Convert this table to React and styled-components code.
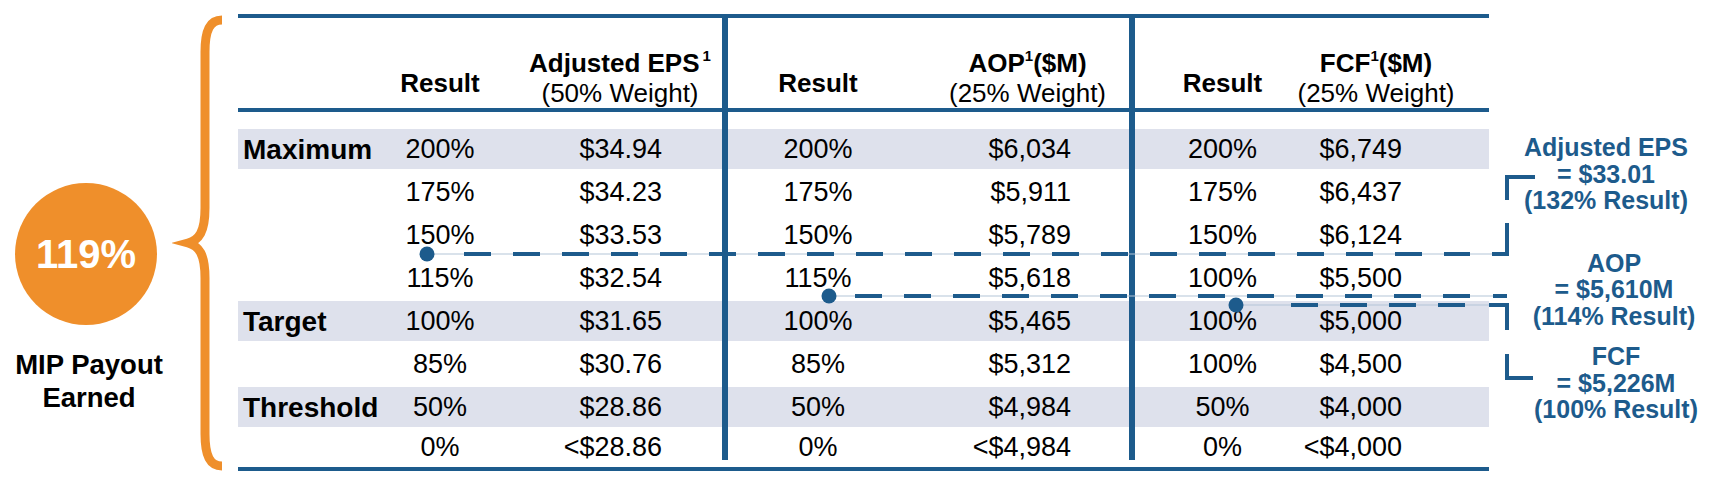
import React from 'react';
import styled, { createGlobalStyle } from 'styled-components';

const BLUE = '#1d5b8c';
const ORANGE = '#ef8f2b';

const GlobalStyle = createGlobalStyle`
  body {
    margin: 0;
    background: #fff;
    overflow: hidden;
    font-family: "Liberation Sans", Arial, sans-serif;
    color: #000;
  }
`;

const Page = styled.div`
  position: relative;
  display: flex;
  width: 1723px;
  height: 495px;
  background: #fff;
`;

const LeftPanel = styled.div`
  width: 172px;
  display: flex;
  flex-direction: column;
  align-items: center;
  padding-top: 183px;
  box-sizing: border-box;
`;

const Badge = styled.div`
  width: 142px;
  height: 142px;
  border-radius: 50%;
  background: ${ORANGE};
  color: #fff;
  font-size: 40px;
  font-weight: 700;
  display: flex;
  align-items: center;
  justify-content: center;
`;

const BadgeCaption = styled.div`
  margin-top: 23px;
  font-size: 27.5px;
  font-weight: 700;
  line-height: 33px;
  text-align: center;
  padding-left: 6px;
`;

const Brace = styled.svg`
  width: 60px;
  height: 495px;
  flex-shrink: 0;
`;

const Table = styled.div`
  display: grid;
  grid-template-columns: 142px 120px 222px 6px 180px 221px 6px 175px 179px;
  grid-template-rows: 4px 90px 4px 16px repeat(7, 43px) 36px 2px 4px;
  width: 1251px;
  margin: 14px 0 0 6px;
  align-self: flex-start;
`;

const Rule = styled.div`
  grid-column: 1 / -1;
  grid-row: ${p => p.$row};
  background: ${BLUE};
`;

const Band = styled.div`
  grid-column: 1 / -1;
  grid-row: ${p => p.$row};
  margin: 1px 0 2px;
  background: #dee1ec;
`;

const Divider = styled.div`
  grid-column: ${p => p.$col};
  grid-row: 1 / 13;
  margin-bottom: 5px;
  background: ${BLUE};
`;

const HeadCell = styled.div`
  grid-row: 2;
  grid-column: ${p => p.$col};
  display: flex;
  flex-direction: column;
  justify-content: flex-end;
  align-items: center;
  padding: 0 ${p => p.$pr || 0}px ${p => p.$pb || 0}px ${p => p.$pl || 0}px;
  font-size: 26px;
  line-height: 30px;
  white-space: nowrap;
`;

const HeadTitle = styled.div`
  font-weight: 700;
`;

const Sup = styled.span`
  font-size: 15px;
  vertical-align: 11px;
  line-height: 0;
  margin-left: ${p => p.$gap || 0}px;
`;

const Cell = styled.div`
  grid-row: ${p => p.$row};
  grid-column: ${p => p.$col};
  display: flex;
  align-items: center;
  justify-content: ${p => p.$justify || 'center'};
  padding: 0 ${p => p.$pr || 0}px 0 ${p => p.$pl || 0}px;
  font-size: 27px;
  white-space: nowrap;
`;

const LabelCell = styled(Cell)`
  font-size: 28px;
  font-weight: 700;
`;

const Notes = styled.div`
  width: 234px;
  display: flex;
  flex-direction: column;
  padding-top: 134px;
  box-sizing: border-box;
`;

const Note = styled.div`
  margin-top: ${p => p.$mt || 0}px;
  padding-left: ${p => p.$shift || 0}px;
  color: ${BLUE};
  font-size: 25px;
  font-weight: 700;
  line-height: 26.5px;
  text-align: center;
  white-space: nowrap;
`;

const Overlay = styled.svg`
  position: absolute;
  left: 0;
  top: 0;
  width: 1723px;
  height: 495px;
  pointer-events: none;
`;

const rows = [
  { label: 'Maximum', shaded: true, r1: '200%', eps: '$34.94', r2: '200%', aop: '$6,034', r3: '200%', fcf: '$6,749' },
  { r1: '175%', eps: '$34.23', r2: '175%', aop: '$5,911', r3: '175%', fcf: '$6,437' },
  { r1: '150%', eps: '$33.53', r2: '150%', aop: '$5,789', r3: '150%', fcf: '$6,124' },
  { r1: '115%', eps: '$32.54', r2: '115%', aop: '$5,618', r3: '100%', fcf: '$5,500' },
  { label: 'Target', shaded: true, r1: '100%', eps: '$31.65', r2: '100%', aop: '$5,465', r3: '100%', fcf: '$5,000' },
  { r1: '85%', eps: '$30.76', r2: '85%', aop: '$5,312', r3: '100%', fcf: '$4,500' },
  { label: 'Threshold', shaded: true, r1: '50%', eps: '$28.86', r2: '50%', aop: '$4,984', r3: '50%', fcf: '$4,000' },
  { r1: '0%', eps: '<$28.86', r2: '0%', aop: '<$4,984', r3: '0%', fcf: '<$4,000' },
];

const columns = [
  { key: 'r1', col: 2 },
  { key: 'eps', col: 3, justify: 'flex-end', pr: 60 },
  { key: 'r2', col: 5 },
  { key: 'aop', col: 6, justify: 'flex-end', pr: 58 },
  { key: 'r3', col: 8 },
  { key: 'fcf', col: 9, justify: 'flex-end', pr: 87 },
];

// dashed leader lines from the dot on each metric to its note
const leaders = [
  { x: 427, y: 254, from: 464, to: 1470 },
  { x: 829, y: 296, from: 855, to: 1470 },
  { x: 1236, y: 305, from: 1291, to: 1465 },
];

const Leaders = () => (
  <Overlay viewBox="0 0 1723 495">
    {leaders.map(l => (
      <g key={l.y}>
        <line x1={l.x} y1={l.y} x2={1507} y2={l.y} stroke="#b3c5d7" strokeWidth="1.2" />
        <line x1={l.from} y1={l.y} x2={l.to} y2={l.y} stroke={BLUE} strokeWidth="4" strokeDasharray="27 22" />
        <circle cx={l.x} cy={l.y} r="7.5" fill={BLUE} />
      </g>
    ))}
    <g fill="none" stroke={BLUE} strokeWidth="4" strokeLinejoin="miter">
      <polyline points="1492,254 1507,254 1507,223" />
      <polyline points="1507,200 1507,177 1535,177" />
      <line x1="1493" y1="296" x2="1507" y2="296" />
      <polyline points="1489,305 1507,305 1507,330" />
      <polyline points="1507,354 1507,378 1533,378" />
    </g>
  </Overlay>
);

const App = () => (
  <Page>
    <GlobalStyle />
    <LeftPanel>
      <Badge>119%</Badge>
      <BadgeCaption>MIP Payout<br />Earned</BadgeCaption>
    </LeftPanel>

    <Brace viewBox="0 0 60 495">
      <path
        d="M50 20 C38 20 33 30 33 52 L33 208 C33 232 27 240 16 243 C27 246 33 254 33 278 L33 434 C33 456 38 466 50 466"
        fill="none"
        stroke={ORANGE}
        strokeWidth="9"
      />
    </Brace>

    <Table>
      <Rule $row={1} />
      <Rule $row={3} />
      <Rule $row={14} />
      {rows.map((r, i) => r.shaded && <Band key={'band' + i} $row={i + 5} />)}
      <Divider $col={4} />
      <Divider $col={7} />

      <HeadCell $col={2} $pb={10}><HeadTitle>Result</HeadTitle></HeadCell>
      <HeadCell $col={3} $pl={18}>
        <HeadTitle>Adjusted EPS<Sup $gap={3}>1</Sup></HeadTitle>
        <div>(50% Weight)</div>
      </HeadCell>
      <HeadCell $col={5} $pb={10}><HeadTitle>Result</HeadTitle></HeadCell>
      <HeadCell $col={6} $pl={18}>
        <HeadTitle>AOP<Sup>1</Sup>($M)</HeadTitle>
        <div>(25% Weight)</div>
      </HeadCell>
      <HeadCell $col={8} $pb={10}><HeadTitle>Result</HeadTitle></HeadCell>
      <HeadCell $col={9} $pr={47}>
        <HeadTitle>FCF<Sup>1</Sup>($M)</HeadTitle>
        <div>(25% Weight)</div>
      </HeadCell>

      {rows.map((r, i) => (
        <React.Fragment key={i}>
          {r.label && <LabelCell $row={i + 5} $col={1} $justify="flex-start" $pl={5}>{r.label}</LabelCell>}
          {columns.map(c => (
            <Cell key={c.key} $row={i + 5} $col={c.col} $justify={c.justify} $pr={c.pr}>
              {r[c.key]}
            </Cell>
          ))}
        </React.Fragment>
      ))}
    </Table>

    <Notes>
      <Note>Adjusted EPS<br />= $33.01<br />(132% Result)</Note>
      <Note $mt={36} $shift={16}>AOP<br />= $5,610M<br />(114% Result)</Note>
      <Note $mt={14} $shift={20}>FCF<br />= $5,226M<br />(100% Result)</Note>
    </Notes>

    <Leaders />
  </Page>
);

export default App;
